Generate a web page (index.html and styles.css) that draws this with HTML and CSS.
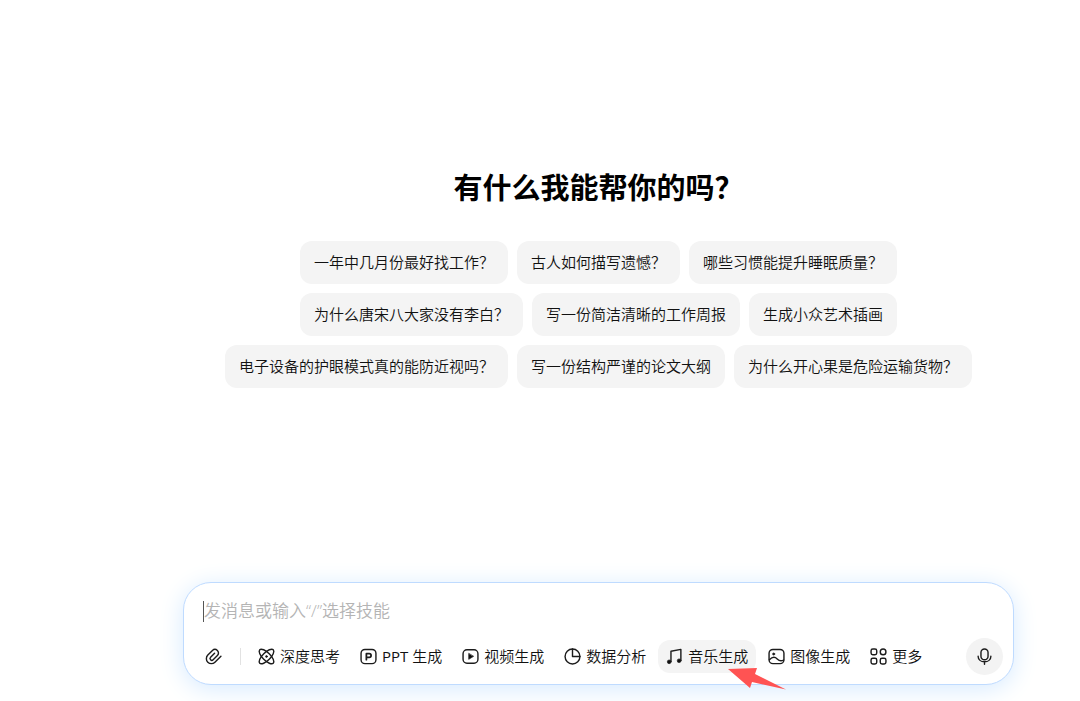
FILE: index.html
```html
<!DOCTYPE html>
<html lang="zh-CN">
<head>
  <meta charset="UTF-8">
  <meta name="viewport" content="width=device-width, initial-scale=1">
  <title>有什么我能帮你的吗？</title>
  <link rel="stylesheet" href="styles.css">
</head>
<body>
  <main class="page">
    <section class="welcome">
      <h1>有什么我能帮你的吗？</h1>
      <div class="suggestions">
        <button type="button" class="suggestion">一年中几月份最好找工作？</button>
        <button type="button" class="suggestion">古人如何描写遗憾？</button>
        <button type="button" class="suggestion">哪些习惯能提升睡眠质量？</button>
        <button type="button" class="suggestion">为什么唐宋八大家没有李白？</button>
        <button type="button" class="suggestion">写一份简洁清晰的工作周报</button>
        <button type="button" class="suggestion">生成小众艺术插画</button>
        <button type="button" class="suggestion">电子设备的护眼模式真的能防近视吗？</button>
        <button type="button" class="suggestion">写一份结构严谨的论文大纲</button>
        <button type="button" class="suggestion">为什么开心果是危险运输货物？</button>
      </div>
    </section>

    <form class="composer">
      <div class="message">
        <span class="caret"></span>
        <input type="text" class="message-input" aria-label="发消息" placeholder="发消息或输入“/”选择技能">
      </div>

      <div class="toolbar">
        <button type="button" class="tool" aria-label="附件">
          <svg class="icon" viewBox="0 0 24 24"><path d="M22.500 11.500l-8.500 8.500a7 7 0 0 1-10-10l6.500-6.500a5 5 0 0 1 7 0a5 5 0 0 1 0 7.200l-6 6a2.500 2.500 0 0 1-3.600-3.600l5.600-5.600"/></svg>
        </button>
        <span class="divider"></span>
        <button type="button" class="tool">
          <svg class="icon" viewBox="0 0 24 24"><ellipse cx="12" cy="12" rx="13.500" ry="5.500" transform="rotate(45 12 12)"/><ellipse cx="12" cy="12" rx="13.500" ry="5.500" transform="rotate(-45 12 12)"/><circle class="fill" cx="12" cy="12" r="1.300"/></svg>
          <span class="tool-name">深度思考</span>
        </button>
        <button type="button" class="tool">
          <svg class="icon" viewBox="0 0 24 24"><rect x="1.500" y="2" width="21" height="20" rx="5.500"/><path class="bold" d="M9 16.500V8h4a2.600 2.600 0 0 1 0 5.300H9"/></svg>
          <span class="tool-name"><span class="latin">PPT</span> 生成</span>
        </button>
        <button type="button" class="tool">
          <svg class="icon" viewBox="0 0 24 24"><rect x="1.500" y="2.500" width="21" height="19" rx="5.500"/><path class="fill" d="M9.500 8v8l6.500-4z"/></svg>
          <span class="tool-name">视频生成</span>
        </button>
        <button type="button" class="tool">
          <svg class="icon" viewBox="0 0 24 24"><circle cx="12" cy="12" r="10.500"/><path d="M12 1.500V12h10.500"/></svg>
          <span class="tool-name">数据分析</span>
        </button>
        <button type="button" class="tool active">
          <svg class="icon" viewBox="0 0 24 24"><path d="M7 19V4.500L21 2v15.500"/><circle class="fill" cx="4.500" cy="19.500" r="2.600"/><circle class="fill" cx="18.500" cy="18" r="2.600"/></svg>
          <span class="tool-name">音乐生成</span>
          <svg class="pointer" viewBox="0 0 58 22" aria-hidden="true"><path d="M0 1L29 0L27 6L58 21.500L24 14L22 20z"/></svg>
        </button>
        <button type="button" class="tool">
          <svg class="icon" viewBox="0 0 24 24"><rect x="1.500" y="2" width="21" height="20" rx="5.500"/><circle class="fill" cx="8" cy="8.500" r="1.500"/><path d="M2 16.500C6 12.500 10 12.500 13 15.500S19 18.500 22 17"/></svg>
          <span class="tool-name">图像生成</span>
        </button>
        <button type="button" class="tool">
          <svg class="icon" viewBox="0 0 24 24"><rect x="1.500" y="1.500" width="8" height="8" rx="2.500"/><rect x="14.500" y="1.500" width="8" height="8" rx="4"/><rect x="1.500" y="14.500" width="8" height="8" rx="2.500"/><rect x="14.500" y="14.500" width="8" height="8" rx="2.500"/></svg>
          <span class="tool-name">更多</span>
        </button>
        <button type="button" class="mic" aria-label="语音输入">
          <svg class="icon" viewBox="0 0 24 24"><rect x="7" y="1.500" width="10" height="15" rx="5"/><path d="M3 11.500c0 5 4 8 9 8s9-3 9-8M12 19.500V23"/></svg>
        </button>
      </div>
    </form>
  </main>
</body>
</html>
```

FILE: styles.css
```css
* {
  box-sizing: border-box;
}

body {
  margin: 0;
  background: #fff;
  color: #111;
  font-family: "Open Sans", "Noto Sans CJK SC", sans-serif;
}

button,
input {
  border: none;
  padding: 0;
  background: none;
  color: inherit;
  font-family: inherit;
  font-weight: 350;
}

button {
  cursor: pointer;
}

.page {
  display: flex;
  flex-direction: column;
  justify-content: space-between;
  align-items: center;
  min-height: 100vh;
  padding: 168px 66px 16px 183px;
}

.welcome {
  display: flex;
  flex-direction: column;
  align-items: center;
}

h1 {
  margin: 0 0 33px;
  color: #000;
  font-size: 29px;
  line-height: 40px;
}

.suggestions {
  display: flex;
  flex-wrap: wrap;
  justify-content: center;
  gap: 9px;
  max-width: 760px;
}

.suggestion {
  height: 43px;
  padding: 0 14px 2px;
  border-radius: 12px;
  background: #f4f4f4;
  font-size: 15px;
  line-height: 22px;
}

.composer {
  width: 100%;
  max-width: 832px;
  padding: 16px 10px 9px 13px;
  border: 1px solid #bfdbff;
  border-radius: 28px;
  background: #fff;
  box-shadow: 0 4px 24px #d6eaff;
}

.message {
  display: flex;
  align-items: center;
  height: 24px;
  margin-bottom: 15px;
  padding-left: 6px;
}

.caret {
  width: 1px;
  height: 21px;
  background: #555;
}

.message-input {
  flex: 1;
  height: 24px;
  padding-bottom: 2px;
  outline: none;
  font-size: 17px;
}

.message-input::placeholder {
  color: #b4b4b4;
}

.toolbar {
  display: flex;
  align-items: center;
  gap: 4px;
}

.tool {
  display: flex;
  align-items: center;
  gap: 5px;
  height: 33px;
  padding: 0 8px;
  border-radius: 12px;
  font-size: 15px;
  line-height: 22px;
  white-space: nowrap;
}

.tool-name {
  padding-bottom: 2px;
}

.latin {
  font-weight: 400;
}

.tool.active {
  position: relative;
  background: #f4f4f4;
}

.divider {
  width: 1px;
  height: 17px;
  margin: 0 5px 0 6px;
  background: #e2e2e2;
}

.icon {
  flex: none;
  width: 17px;
  height: 17px;
  overflow: visible;
  fill: none;
  stroke: #1c1c1c;
  stroke-width: 2;
  stroke-linecap: round;
  stroke-linejoin: round;
}

.icon .fill {
  fill: #111;
  stroke-width: 1;
}

.icon .bold {
  stroke-width: 2.5;
}

/* red arrow over the music button */
.pointer {
  position: absolute;
  top: 28px;
  left: 70px;
  z-index: 1;
  width: 58px;
  height: 22px;
  fill: #ff5353;
}

.mic {
  display: flex;
  align-items: center;
  justify-content: center;
  width: 37px;
  height: 37px;
  margin-left: auto;
  border-radius: 50%;
  background: #f3f3f3;
}
```
